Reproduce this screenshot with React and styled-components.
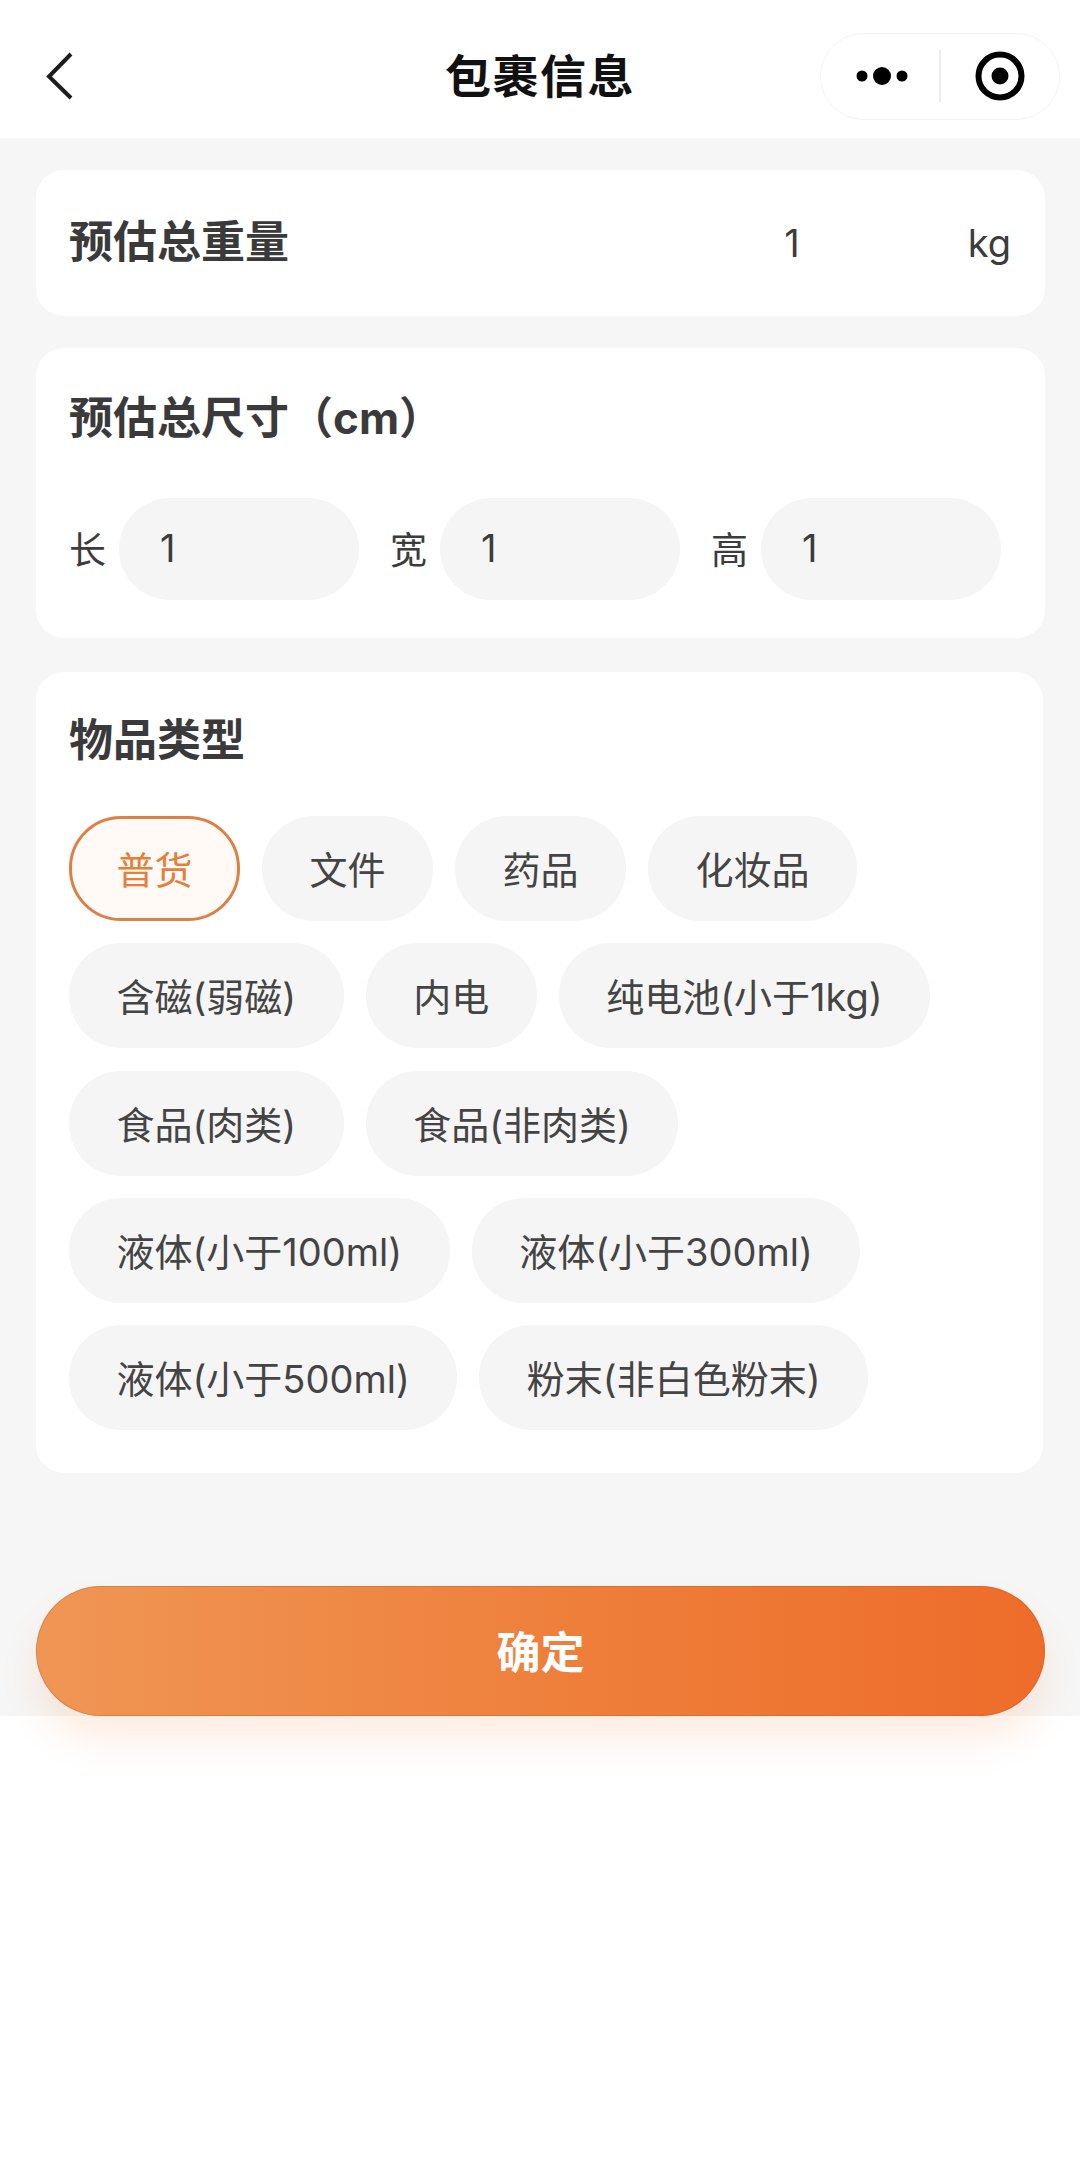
import React from "react";
import styled, { createGlobalStyle } from "styled-components";

const GlobalStyle = createGlobalStyle`
  html, body { margin: 0; padding: 0; background: #fff; }
  body { font-family: "Inter", "Noto Sans CJK SC", sans-serif; }
  * { box-sizing: border-box; }
`;
const Page = styled.div`width: 1080px; height: 2174px; background: #fff; display: flex; flex-direction: column;`;
const NavBar = styled.header`height: 138px; background: #fff; display: grid; grid-template-columns: 1fr auto 1fr; align-items: center; padding: 14px 20px 0;`;
const NavTitle = styled.h1`margin: 0; font-size: 46px; line-height: 54px; font-weight: 700; color: #111; letter-spacing: 1.5px;`;
const BackButton = styled.svg`width: 32px; height: 50px; display: block; margin-left: 24px;`;
const Capsule = styled.div`justify-self: end; width: 240px; height: 87px; border-radius: 44px; border: 1px solid #f2f2f2; display: flex; align-items: center;`;
const CapsuleHalf = styled.div`flex: 1; display: flex; justify-content: center; align-items: center;`;
const CapsuleLine = styled.div`width: 2px; height: 52px; background: #ececec;`;
const MoreDots = styled.svg`width: 52px; height: 20px; margin-left: 4px;`;
const Body = styled.main`height: 1578px; background: #f6f6f6; padding: 32px 35px 0 36px; display: flex; flex-direction: column;`;
const Card = styled.section`background: #fff; border-radius: 28px;`;
const WeightCard = styled(Card)`height: 146px; margin-bottom: 32px; display: flex; align-items: center; padding: 0 34px 0 33px;`;
const CardTitle = styled.h2`margin: 0; font-size: 44px; line-height: 56px; font-weight: 700; color: #3a3a3a;`;
const WeightTitle = styled(CardTitle)`margin-bottom: 2px;`;
const WeightValue = styled.span`margin-left: auto; margin-right: 168px; font-size: 38px; color: #3c3c3c;`;
const Unit = styled.span`font-size: 38px; color: #3c3c3c;`;
const SizeCard = styled(Card)`height: 290px; margin-bottom: 34px; padding: 42px 33px 0;`;
const SizeRow = styled.div`display: flex; align-items: center; margin-top: 52px; gap: 31px;`;
const SizeField = styled.div`display: flex; align-items: center; gap: 13px;`;
const SizeLabel = styled.span`font-size: 37px; color: #3c3c3c; width: 37px; padding-bottom: 2px;`;
const SizeInput = styled.div`width: 240px; height: 102px; border-radius: 51px; background: #f5f5f5; display: flex; align-items: center; padding: 0 0 3px 41px; font-size: 38px; color: #3c3c3c;`;
const TypeCard = styled(Card)`height: 801px; margin-right: 2px; padding: 40px 33px 0;`;
const ChipRows = styled.div`display: flex; flex-direction: column; gap: 22.3px; margin-top: 48px;`;
const ChipRow = styled.div`display: flex; gap: 22px;`;
const Chip = styled.div`height: 105px; padding: 0 ${p => p.$active ? 44.5 : 47.5}px 2px; border-radius: 52px; display: flex; align-items: center; font-size: 38px; white-space: nowrap;
  background: ${p => p.$active ? "#fffaf6" : "#f5f5f5"};
  color: ${p => p.$active ? "#e67e3c" : "#444"};
  border: ${p => p.$active ? "3px solid #df7f45" : "none"};`;
const ConfirmButton = styled.button`height: 130px; margin-top: 113px; padding: 0 0 3px; border: none; border-radius: 65px; width: 1009px; font-family: inherit; color: #fff; font-size: 44px; font-weight: 700;
  background: linear-gradient(90deg, #f09655 0%, #ee7e3a 55%, #ee6c2a 100%);
  box-shadow: inset 0 0 0 1px rgba(190,90,40,0.35), 0 24px 36px rgba(240,130,60,0.14);`;

const rows = [
  [["普货", true], ["文件"], ["药品"], ["化妆品"]],
  [["含磁(弱磁)"], ["内电"], ["纯电池(小于1kg)"]],
  [["食品(肉类)"], ["食品(非肉类)"]],
  [["液体(小于100ml)"], ["液体(小于300ml)"]],
  [["液体(小于500ml)"], ["粉末(非白色粉末)"]],
];

export default function App() {
  return (
    <Page>
      <GlobalStyle />
      <NavBar>
        <BackButton viewBox="0 0 32 50"><path d="M27 3 L5 25.500 L27 47" fill="none" stroke="#1c1c1c" strokeWidth="4" /></BackButton>
        <NavTitle>包裹信息</NavTitle>
        <Capsule>
          <CapsuleHalf>
            <MoreDots viewBox="0 0 52 20"><circle cx="6" cy="10" r="5.500" fill="#000" /><circle cx="26" cy="10" r="9" fill="#000" /><circle cx="46" cy="10" r="5.500" fill="#000" /></MoreDots>
          </CapsuleHalf>
          <CapsuleLine />
          <CapsuleHalf>
            <svg width="50" height="50" viewBox="0 0 50 50"><circle cx="25" cy="25" r="21.500" fill="none" stroke="#000" strokeWidth="6" /><circle cx="25" cy="25" r="8.500" fill="#000" /></svg>
          </CapsuleHalf>
        </Capsule>
      </NavBar>
      <Body>
        <WeightCard>
          <WeightTitle>预估总重量</WeightTitle>
          <WeightValue>1</WeightValue>
          <Unit>kg</Unit>
        </WeightCard>
        <SizeCard>
          <CardTitle>预估总尺寸（cm）</CardTitle>
          <SizeRow>
            {["长", "宽", "高"].map((l) => (
              <SizeField key={l}><SizeLabel>{l}</SizeLabel><SizeInput>1</SizeInput></SizeField>
            ))}
          </SizeRow>
        </SizeCard>
        <TypeCard>
          <CardTitle>物品类型</CardTitle>
          <ChipRows>
            {rows.map((r, i) => (
              <ChipRow key={i}>
                {r.map(([t, a]) => <Chip key={t} $active={a}>{t}</Chip>)}
              </ChipRow>
            ))}
          </ChipRows>
        </TypeCard>
        <ConfirmButton>确定</ConfirmButton>
      </Body>
    </Page>
  );
}
